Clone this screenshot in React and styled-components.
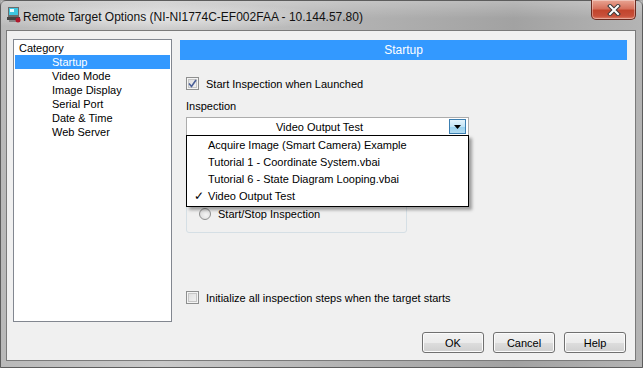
import React, { useState } from "react"
import styled, { createGlobalStyle } from "styled-components"

const GlobalStyle = createGlobalStyle`
  html, body {
    margin: 0;
    padding: 0;
    width: 643px;
    height: 368px;
    overflow: hidden;
    background: #a9a9a9;
  }
  * { box-sizing: border-box; }
`

const Window = styled.div`
  width: 643px;
  height: 368px;
  display: flex;
  flex-direction: column;
  font-family: Tahoma, "Liberation Sans", Arial, sans-serif;
  font-size: 11px;
  color: #000;
  background: linear-gradient(to right, #b9b9b9 0%, #c9c9c9 25%, #b2b2b2 55%, #a2a2a2 80%, #b4b4b4 100%);
  border: 1px solid #5d5d5d;
  border-radius: 6px 6px 0 0;
`

const TitleBar = styled.div`
  height: 29px;
  flex: none;
  display: flex;
  align-items: flex-start;
  padding: 5px 0 0 5px;
  position: relative;
  background:
    radial-gradient(ellipse 190px 14px at 150px 16px, rgba(235,235,235,0.85), rgba(235,235,235,0) 100%),
    linear-gradient(to bottom, rgba(255,255,255,0.25), rgba(255,255,255,0) 60%);
`

const TitleText = styled.span`
  font-family: "Liberation Sans", Arial, sans-serif;
  font-size: 12px;
  margin-left: 1px;
  margin-top: 4px;
  color: #111;
`

const CloseButton = styled.div`
  position: absolute;
  top: -1px;
  right: 6px;
  width: 45px;
  height: 20px;
  border: 1px solid #6b2a1f;
  border-top: none;
  border-radius: 0 0 5px 5px;
  background: linear-gradient(to bottom, #e9a593 0%, #d6715c 45%, #c2452d 55%, #c8503a 85%, #e0826b 100%);
  box-shadow: inset 0 0 0 1px rgba(255,255,255,0.35);
  display: flex;
  align-items: center;
  justify-content: center;
`

const Client = styled.div`
  flex: 1;
  margin: 0 6px 6px 5px;
  background: #f0f0f0;
  border: 1px solid #7a7a7a;
  display: flex;
  flex-direction: column;
  padding: 8px 8px 0 6px;
`

const Content = styled.div`
  display: flex;
  height: 283px;
  gap: 8px;
`

const CategoryList = styled.div`
  width: 159px;
  flex: none;
  background: #fff;
  border: 1px solid #828790;
  padding: 1px;
  display: flex;
  flex-direction: column;
`

const CategoryHeader = styled.div`
  height: 14px;
  line-height: 14px;
  padding-left: 4px;
`

const CategoryItem = styled.div`
  height: 14px;
  line-height: 14px;
  padding-left: 37px;
  background: ${p => (p.selected ? "#3399ff" : "transparent")};
  color: ${p => (p.selected ? "#fff" : "#000")};
`

const Panel = styled.div`
  flex: 1;
  display: flex;
  flex-direction: column;
  position: relative;
  padding-top: 1px;
`

const PanelHeader = styled.div`
  height: 20px;
  background: #3399ff;
  color: #fff;
  font-size: 12px;
  text-align: center;
  line-height: 20px;
`

const PanelBody = styled.div`
  padding-left: 6px;
  display: flex;
  flex-direction: column;
  position: relative;
`

const CheckRow = styled.label`
  display: flex;
  align-items: center;
  gap: 7px;
  height: 13px;
  margin-top: ${p => p.$top || 0}px;
`

const Box = styled.span`
  width: 13px;
  height: 13px;
  flex: none;
  border: 1px solid #8e8f8f;
  background: linear-gradient(135deg, #dcdcdc 0%, #f4f4f4 100%);
  box-shadow: inset 0 0 0 1px #f4f4f4, inset 0 0 0 2px #c6c6c6;
  display: flex;
  align-items: center;
  justify-content: center;
`

const FieldLabel = styled.div`
  margin-top: 10px;
  height: 13px;
  line-height: 13px;
`

const Combo = styled.div`
  margin-top: 4px;
  width: 283px;
  height: 19px;
  background: #fff;
  border: 1px solid #acacac;
  display: flex;
  align-items: center;
  position: relative;
`

const ComboValue = styled.div`
  flex: 1;
  text-align: center;
  padding-left: 3px;
`

const ComboButton = styled.div`
  width: 17px;
  height: 15px;
  margin-right: 2px;
  border: 1px solid #3c7fb1;
  background: linear-gradient(to bottom, #e5f4fc 0%, #c4e5f6 50%, #98d1ef 51%, #b3dcf1 100%);
  display: flex;
  align-items: center;
  justify-content: center;
`

const DropList = styled.div`
  position: absolute;
  top: 17px;
  left: -1px;
  width: 283px;
  background: #fff;
  border: 1px solid #000;
  box-shadow: 3px 3px 3px rgba(0, 0, 0, 0.35);
  padding: 1px 0 1px;
  z-index: 2;
`

const DropItem = styled.div`
  height: 17px;
  line-height: 17px;
  padding-left: 21px;
  position: relative;
`

const Tick = styled.span`
  position: absolute;
  left: 7px;
  top: 0;
  font-size: 12px;
`

const GroupBox = styled.div`
  margin-top: 8px;
  width: 221px;
  height: 89px;
  border: 1px solid #d5dfe5;
  border-radius: 3px;
  padding: 62px 0 0 12px;
  display: flex;
  flex-direction: column;
`

const RadioRow = styled.div`
  display: flex;
  align-items: center;
  gap: 7px;
  height: 13px;
`

const Radio = styled.span`
  width: 12px;
  height: 12px;
  border-radius: 50%;
  border: 1px solid #8e8f8f;
  background: radial-gradient(circle at 60% 60%, #f4f4f4 0%, #d4d4d4 100%);
`

const Footer = styled.div`
  display: flex;
  justify-content: flex-end;
  gap: 9px;
  margin-top: 10px;
  padding-right: 1px;
`

const Button = styled.button`
  width: 62px;
  height: 21px;
  font-family: Tahoma, "Liberation Sans", Arial, sans-serif;
  font-size: 11px;
  color: #000;
  border: 1px solid #707070;
  border-radius: 3px;
  background: linear-gradient(to bottom, #f2f2f2 0%, #ebebeb 50%, #dddddd 51%, #cfcfcf 100%);
  box-shadow: inset 0 0 0 1px #fbfbfb;
  padding: 0;
`

const AppIcon = () => (
  <svg width="16" height="18" viewBox="0 0 16 18">
    <rect x="2" y="1" width="11" height="10" fill="#6a6a6a" />
    <rect x="3" y="2" width="9" height="7" fill="#3ec6e0" />
    <rect x="4" y="3" width="4" height="3" fill="#e8fbff" />
    <rect x="1" y="11" width="13" height="3" fill="#444" />
    <rect x="3" y="14" width="8" height="2" fill="#888" />
    <circle cx="12" cy="14" r="2.5" fill="#b0182c" />
  </svg>
)

const CloseGlyph = () => (
  <svg width="14" height="12" viewBox="0 0 14 12">
    <path d="M3 2 L11 10 M11 2 L3 10" stroke="#3a3a3a" strokeWidth="4" strokeLinecap="square" />
    <path d="M3 2 L11 10 M11 2 L3 10" stroke="#fff" strokeWidth="2" strokeLinecap="square" />
  </svg>
)

const CheckMark = () => (
  <svg width="9" height="9" viewBox="0 0 9 9">
    <path d="M1 4.5 L3.5 7.5 L8 1" fill="none" stroke="#4a5f97" strokeWidth="1.6" />
  </svg>
)

const categories = ["Startup", "Video Mode", "Image Display", "Serial Port", "Date & Time", "Web Server"]
const inspections = [
  "Acquire Image (Smart Camera) Example",
  "Tutorial 1 - Coordinate System.vbai",
  "Tutorial 6 - State Diagram Looping.vbai",
  "Video Output Test"
]

export default function App() {
  const [selected] = useState("Startup")
  const [current] = useState("Video Output Test")
  return (
    <>
      <GlobalStyle />
      <Window>
        <TitleBar>
          <AppIcon />
          <TitleText>Remote Target Options (NI-NI1774C-EF002FAA - 10.144.57.80)</TitleText>
          <CloseButton><CloseGlyph /></CloseButton>
        </TitleBar>
        <Client>
          <Content>
            <CategoryList>
              <CategoryHeader>Category</CategoryHeader>
              {categories.map(c => (
                <CategoryItem key={c} selected={c === selected}>{c}</CategoryItem>
              ))}
            </CategoryList>
            <Panel>
              <PanelHeader>Startup</PanelHeader>
              <PanelBody>
                <CheckRow $top={17}>
                  <Box><CheckMark /></Box>
                  Start Inspection when Launched
                </CheckRow>
                <FieldLabel>Inspection</FieldLabel>
                <Combo>
                  <ComboValue>{current}</ComboValue>
                  <ComboButton>
                    <svg width="7" height="4" viewBox="0 0 7 4"><path d="M0 0 H7 L3.5 4 Z" fill="#000" /></svg>
                  </ComboButton>
                  <DropList>
                    {inspections.map(i => (
                      <DropItem key={i}>
                        {i === current && <Tick>✓</Tick>}
                        {i}
                      </DropItem>
                    ))}
                  </DropList>
                </Combo>
                <GroupBox>
                  <RadioRow><Radio />Start/Stop Inspection</RadioRow>
                </GroupBox>
                <CheckRow $top={58}>
                  <Box />
                  Initialize all inspection steps when the target starts
                </CheckRow>
              </PanelBody>
            </Panel>
          </Content>
          <Footer>
            <Button>OK</Button>
            <Button>Cancel</Button>
            <Button>Help</Button>
          </Footer>
        </Client>
      </Window>
    </>
  )
}
